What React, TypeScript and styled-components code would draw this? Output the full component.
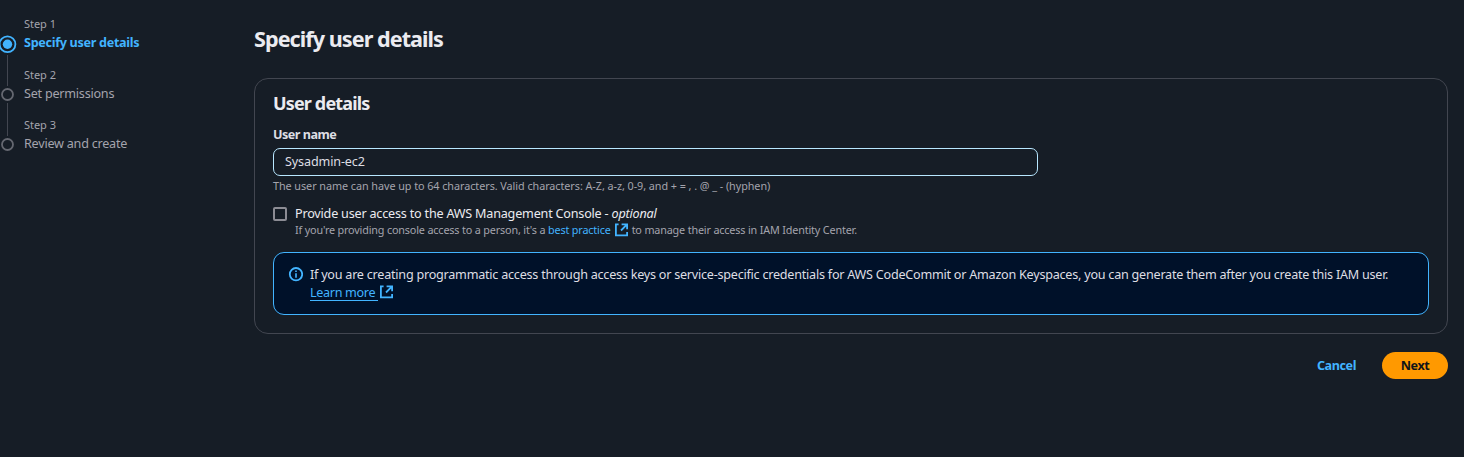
import React from 'react';
import styled, { createGlobalStyle, css } from 'styled-components';

const GlobalStyle = createGlobalStyle`
  * { box-sizing: border-box; }
  body {
    margin: 0;
    background: #161d26;
    color: #dedee3;
    font-family: "Noto Sans", "Open Sans", sans-serif;
    font-size: 12.6px;
    line-height: 18px;
    overflow: hidden;
  }
`;

const Page = styled.div`
  display: flex;
  height: 457px;
  white-space: nowrap;
`;

const Nav = styled.ol`
  flex: none;
  width: 254px;
  margin: 0;
  padding: 15px 0 0;
  list-style: none;
`;

const StepItem = styled.li<{ $height: number }>`
  display: flex;
  gap: 8px;
  height: ${p => p.$height}px;
`;

const StepMarker = styled.svg`
  flex: none;
  display: block;
  overflow: visible;
`;

const StepLabel = styled.div`
  font-size: 11px;
  letter-spacing: -0.04px;
  color: #a4a4ad;
`;

const StepTitle = styled.div<{ $active?: boolean }>`
  margin-top: 1px;
  letter-spacing: -0.23px;
  color: #a4a4ad;
  ${p => p.$active && css`
    color: #42b4ff;
    font-weight: 700;
    letter-spacing: -0.3px;
  `}
`;

const Main = styled.main`
  flex: 1;
  min-width: 0;
  padding: 24px 16px 0 0;
`;

const PageTitle = styled.h1`
  margin: 0 0 25px;
  color: #ebebf0;
  font-size: 21.6px;
  line-height: 29px;
  font-weight: 700;
  letter-spacing: -0.95px;
`;

const Panel = styled.section`
  height: 256px;
  padding: 13px 18px 0;
  border: 1px solid #424650;
  border-radius: 14px;
`;

const PanelTitle = styled.h2`
  margin: 0;
  color: #ebebf0;
  font-size: 18px;
  line-height: 22px;
  letter-spacing: -0.85px;
`;

const FieldLabel = styled.label`
  display: block;
  margin-top: 12px;
  font-weight: 700;
  letter-spacing: -0.5px;
`;

const TextInput = styled.input`
  display: block;
  width: 765px;
  height: 28px;
  margin-top: 4px;
  padding: 0 11px 1px;
  border: 1px solid #b8e7ff;
  border-radius: 7px;
  outline: none;
  background: #161d26;
  color: #dedee3;
  font: inherit;
  letter-spacing: -0.13px;
`;

const Hint = styled.div`
  margin-top: 2px;
  font-size: 10.8px;
  line-height: 15px;
  letter-spacing: -0.05px;
  color: #a4a4ad;
`;

const CheckRow = styled.div`
  display: flex;
  gap: 8px;
  margin-top: 12px;
`;

const CheckBox = styled.span`
  flex: none;
  width: 14px;
  height: 14px;
  margin-top: 2px;
  border: 2px solid #8c8c94;
  border-radius: 2px;
`;

const CheckLabel = styled.div`
  height: 17px;
  color: #ebebf0;
  letter-spacing: -0.2px;
`;

const CheckHint = styled.div`
  display: flex;
  font-size: 10.8px;
  line-height: 15px;
  letter-spacing: -0.16px;
  color: #a4a4ad;
`;

const Link = styled.a<{ $underlined?: boolean }>`
  display: inline-flex;
  align-items: flex-start;
  color: #42b4ff;
  svg { margin: 1px 3px 0 3px; }
  ${p => p.$underlined && css`
    height: 17px;
    letter-spacing: -0.33px;
    span { height: 17px; padding-right: 3px; border-bottom: 1px solid #42b4ff; }
    svg { margin: 1px 0 0 1px; }
  `}
`;

const Alert = styled.div`
  display: flex;
  height: 63px;
  margin-top: 15px;
  padding: 13px 14px 0;
  gap: 7px;
  border: 1px solid #42b4ff;
  border-radius: 11px;
  background: #001129;
  letter-spacing: -0.235px;
  & > svg { margin-top: 1px; }
`;

const Actions = styled.div`
  display: flex;
  justify-content: flex-end;
  margin-top: 18px;
`;

const Button = styled.button<{ $primary?: boolean }>`
  height: 27px;
  padding: 0;
  border: 0;
  border-radius: 14px;
  background: transparent;
  color: #42b4ff;
  font: inherit;
  font-weight: 700;
  letter-spacing: -0.4px;
  width: 91px;
  ${p => p.$primary && css`
    width: 66px;
    background: #ff9900;
    color: #0f141a;
  `}
`;

const ExternalIcon = () => (
  <svg width="15" height="14" viewBox="0 0 15 14" fill="none" stroke="currentColor" strokeWidth="1.8">
    <path d="M4.6 1.4H1.9V12.4H13.1V9" />
    <path d="M7.6 1.4H13.1V6.2M12.8 1.7L7 7.5" />
  </svg>
);

const InfoIcon = () => (
  <svg width="15" height="15" viewBox="0 0 15 15" fill="none" stroke="#42b4ff" strokeWidth="1.8">
    <circle cx="8" cy="7.2" r="6.2" />
    <path d="M8 6.2V10.7M8 3.5V5.1" strokeWidth="1.6" />
  </svg>
);

const steps = [
  { title: 'Specify user details', height: 51, line: [40, 71] },
  { title: 'Set permissions', height: 50, line: [37, 70] },
  { title: 'Review and create', height: 50, line: null },
];

export default function App() {
  return (
    <Page>
      <GlobalStyle />
      <Nav>
        {steps.map((step, i) => (
          <StepItem key={step.title} $height={step.height}>
            <StepMarker width="16" height="50" fill="none">
              {i === 0 ? (
                <>
                  <circle cx="7.5" cy="29.3" r="7.9" stroke="#42b4ff" strokeWidth="1.8" />
                  <circle cx="7.5" cy="29.3" r="4.7" fill="#42b4ff" />
                </>
              ) : (
                <circle cx="7.5" cy="28.5" r="5.5" stroke="#656871" strokeWidth="1.8" />
              )}
              {step.line && <path d={`M7.5 ${step.line[0]}V${step.line[1]}`} stroke="#424650" />}
            </StepMarker>
            <div>
              <StepLabel>Step {i + 1}</StepLabel>
              <StepTitle $active={i === 0}>{step.title}</StepTitle>
            </div>
          </StepItem>
        ))}
      </Nav>
      <Main>
        <PageTitle>Specify user details</PageTitle>
        <Panel>
          <PanelTitle>User details</PanelTitle>
          <FieldLabel htmlFor="user-name">User name</FieldLabel>
          <TextInput id="user-name" defaultValue="Sysadmin-ec2" />
          <Hint>The user name can have up to 64 characters. Valid characters: A-Z, a-z, 0-9, and + = , . @ _ - (hyphen)</Hint>
          <CheckRow>
            <CheckBox />
            <div>
              <CheckLabel>Provide user access to the AWS Management Console - <i>optional</i></CheckLabel>
              <CheckHint>
                <span>If you're providing console access to a person, it's a&nbsp;</span>
                <Link><span>best practice</span><ExternalIcon /></Link>
                <span>to manage their access in IAM Identity Center.</span>
              </CheckHint>
            </div>
          </CheckRow>
          <Alert>
            <InfoIcon />
            <div>
              <div>If you are creating programmatic access through access keys or service-specific credentials for AWS CodeCommit or Amazon Keyspaces, you can generate them after you create this IAM user.</div>
              <Link $underlined><span>Learn more</span><ExternalIcon /></Link>
            </div>
          </Alert>
        </Panel>
        <Actions>
          <Button>Cancel</Button>
          <Button $primary>Next</Button>
        </Actions>
      </Main>
    </Page>
  );
}
